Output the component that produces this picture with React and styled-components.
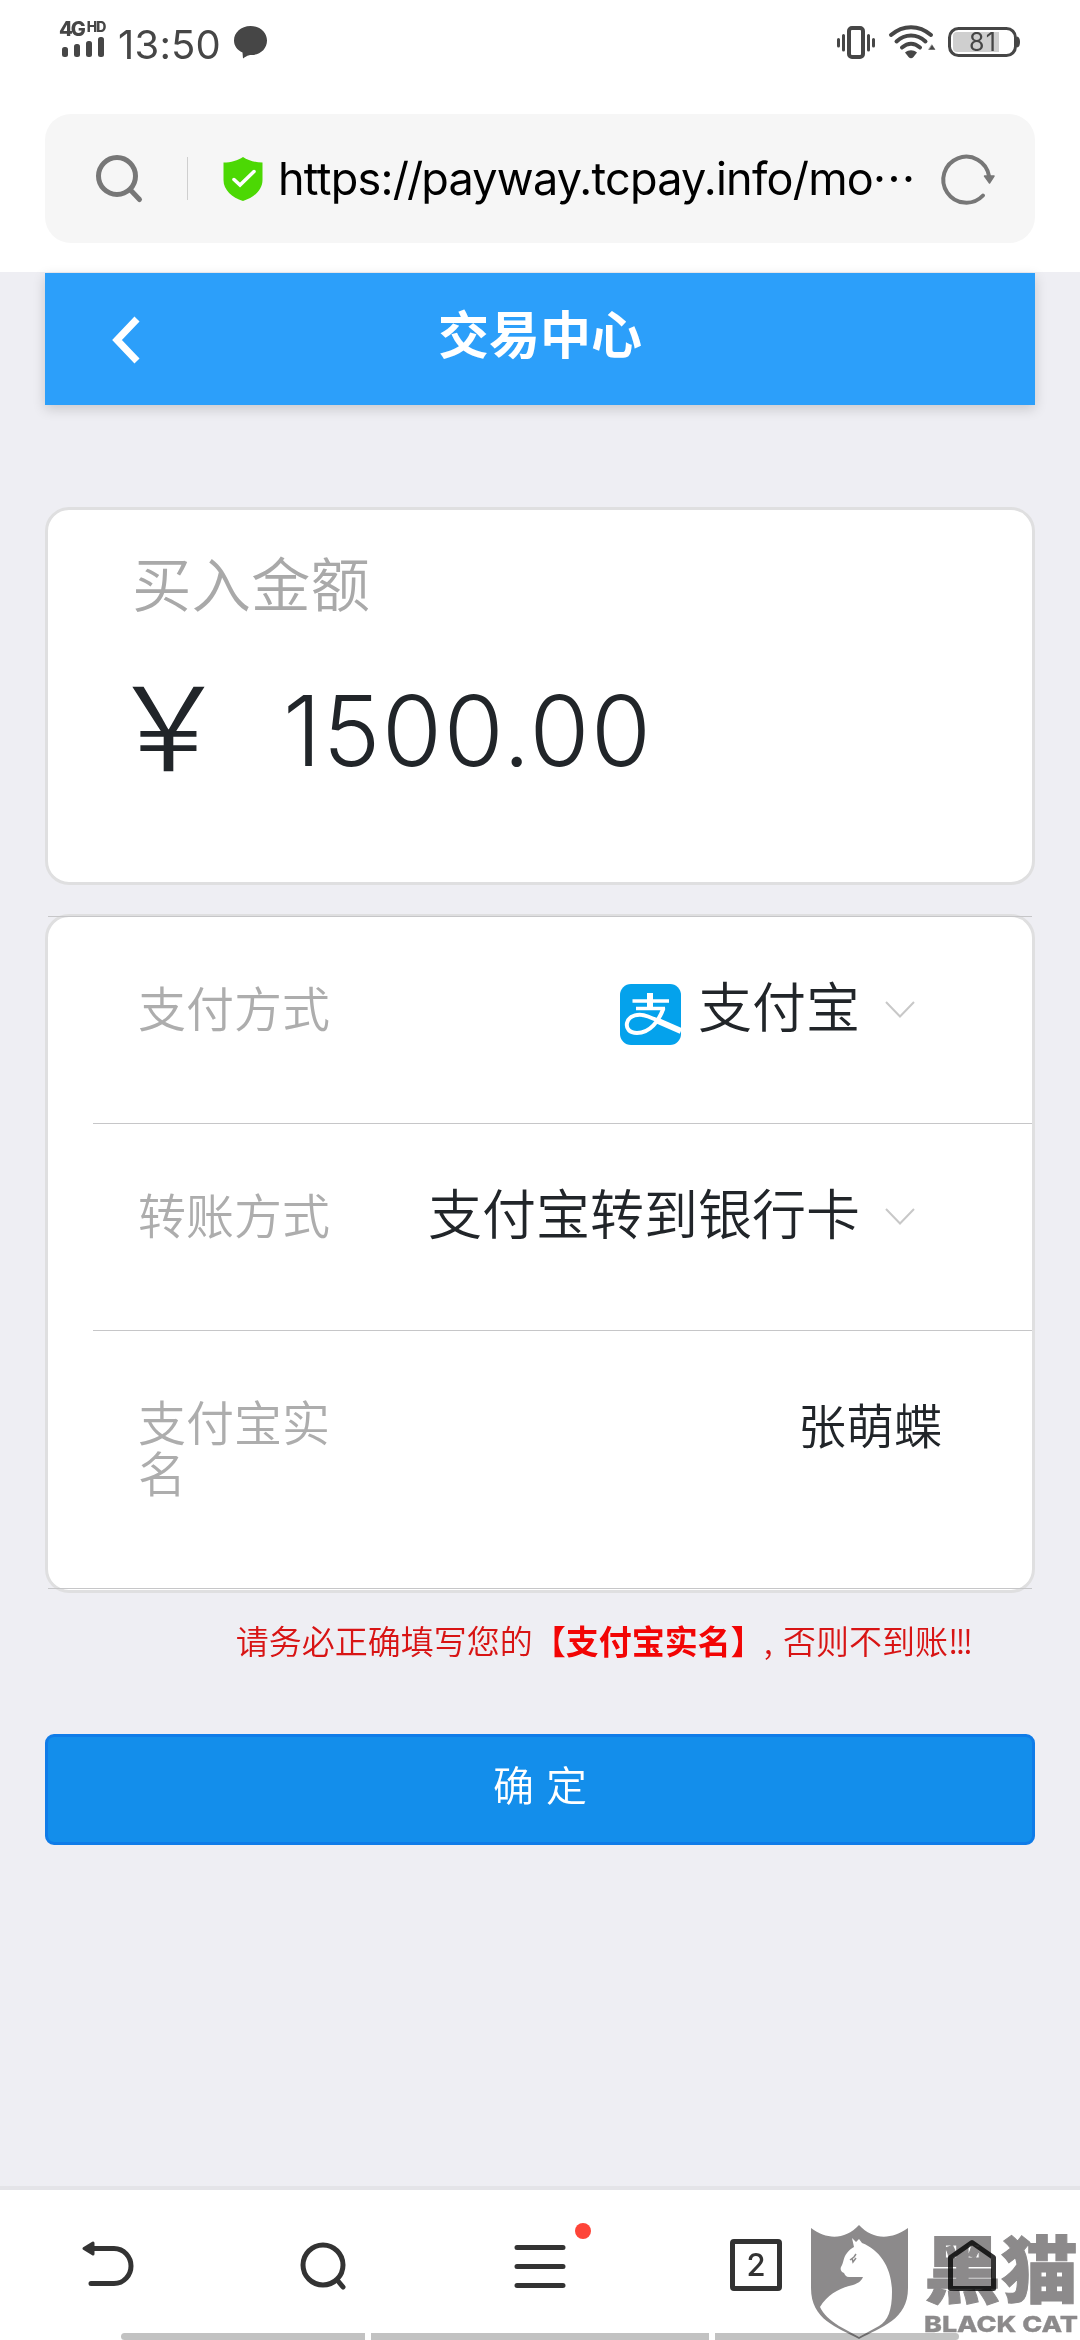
import React from 'react'
import styled, { createGlobalStyle } from 'styled-components'

const GlobalStyle = createGlobalStyle`
  body {
    margin: 0;
    background-color: #eeeef3;
    font-family: "Noto Sans CJK SC", "Noto Sans", sans-serif;
  }

  * {
    box-sizing: border-box;
  }

  svg {
    display: block;
    flex: none;
    overflow: visible;
  }
`;

const Phone = styled.div`
  position: relative;
  width: 1080px;
  height: 2340px;
  display: flex;
  flex-direction: column;
  overflow: hidden;
  background-color: #eeeef3;
`;

const Top = styled.div`
  height: 272px;
  flex: none;
  background-color: #fff;
  padding: 0 45px;
`;

const StatusBar = styled.div`
  height: 114px;
  display: flex;
  justify-content: space-between;
  padding: 20px 14px 0 14px;
`;

const StatusSide = styled.div`
  display: flex;
  align-items: flex-start;
`;

const Signal = styled.div`
  width: 50px;
  height: 40px;
  margin-right: 9px;
`;

const Network = styled.div`
  display: flex;
  gap: 3px;
  height: 17px;
  color: #464646;
  font-family: Inter, sans-serif;
  font-weight: 800;
  font-size: 20px;
  line-height: 19px;
  letter-spacing: -2px;

  small {
    font-size: 14px;
    line-height: 14px;
    letter-spacing: -1px;
  }
`;

const Clock = styled.div`
  width: 106px;
  margin-right: 9px;
  color: #464646;
  font-family: Inter, sans-serif;
  font-size: 40px;
  line-height: 49px;
  font-weight: 400;
  letter-spacing: 0.2px;
  white-space: nowrap;
`;

const StatusIcon = styled.div`
  margin-right: ${(props) => props.$gap || 0}px;
`;

const AddressBar = styled.div`
  height: 129px;
  border-radius: 26px;
  background-color: #f6f6f6;
  display: flex;
  align-items: center;
  padding: 0 40px 0 50px;
`;

const Divider = styled.div`
  width: 1px;
  height: 43px;
  margin: 0 35px 0 43px;
  background-color: #cfcfcf;
`;

const Url = styled.div`
  flex: 1;
  margin-left: 15px;
  color: #000;
  font-family: Inter, sans-serif;
  font-size: 45px;
  line-height: 60px;
  letter-spacing: -0.75px;
  white-space: nowrap;
`;

const Slashes = styled.span`
  letter-spacing: -2px;
`;

const Dots = styled.span`
  letter-spacing: 1.5px;
`;

const Page = styled.div`
  flex: 1;
  padding: 1px 45px 0 45px;
`;

const Header = styled.div`
  height: 132px;
  display: flex;
  align-items: center;
  background-color: #2c9ffa;
  box-shadow: 0 4px 12px rgba(0, 0, 0, 0.16);
`;

const Back = styled.div`
  width: 120px;
  padding-left: 65px;
`;

const Title = styled.h1`
  flex: 1;
  margin: 0 120px 0 0;
  padding-bottom: 14px;
  color: #fff;
  font-size: 51px;
  line-height: 60px;
  font-weight: 700;
  text-align: center;
`;

const AmountCard = styled.div`
  height: 378px;
  margin-top: 102px;
  padding: 36px 84px 0 84px;
  border: 3px solid #dfdfe0;
  border-radius: 24px;
  background-color: #fff;
`;

const AmountLabel = styled.div`
  color: #a9a9a9;
  font-size: 59.5px;
  line-height: 70px;
  font-weight: 350;
`;

const Amount = styled.div`
  margin-top: 60px;
  height: 110px;
  display: flex;
  color: #212529;
`;

const Yen = styled.div`
  width: 173px;
  margin-left: -22px;
  font-size: 117px;
  font-weight: 350;
  line-height: 88px;
`;

const Sum = styled.div`
  font-family: Inter, sans-serif;
  font-size: 97px;
  font-weight: 300;
  line-height: 110px;
  letter-spacing: 1.7px;
`;

const List = styled.div`
  height: 679px;
  margin-top: 29px;
  border: 3px solid #dfdfe0;
  border-radius: 24px;
  background-color: #fff;
`;

const Line = styled.div`
  height: 1px;
  margin-top: ${(props) => (props.$first ? -1 : 0)}px;
  margin-left: ${(props) => props.$inset || 0}px;
  background-color: #c6c6c8;
`;

const Row = styled.div`
  height: ${(props) => props.$height || 206}px;
  display: flex;
  justify-content: space-between;
  padding: 64px 90px 0 90px;
`;

const Label = styled.div`
  width: 200px;
  color: #adadad;
  font-size: 48px;
  line-height: 51px;
  font-weight: 350;
`;

const Value = styled.div`
  display: flex;
  margin: ${(props) => (props.$small ? '0' : '-6px 27px 0 0')};
  color: #212529;
  font-size: ${(props) => (props.$small ? 48 : 54)}px;
  line-height: ${(props) => (props.$small ? 56 : 60)}px;
  font-weight: 350;
  white-space: nowrap;
`;

const AlipayIcon = styled.div`
  margin: 9px 17px 0 0;
`;

const Arrow = styled.div`
  margin: 25px 0 0 25px;
`;

const Notice = styled.p`
  margin: 24px 65px 0 0;
  color: #d81414;
  font-size: 33px;
  line-height: 46px;
  font-weight: 350;
  text-align: right;
  white-space: nowrap;

  b {
    color: #f20505;
  }
`;

const Mark = styled.span`
  letter-spacing: ${(props) => props.$space}px;
`;

const Submit = styled.button`
  display: block;
  width: 100%;
  height: 111px;
  margin: 71px 0 0 0;
  padding: 0 0 14px 0;
  border: 3px solid #0f7ce8;
  border-radius: 9px;
  background-color: #138eeb;
  color: #fff;
  font-family: inherit;
  font-size: 41px;
  font-weight: 350;
  line-height: 50px;
  word-spacing: 3px;
`;

const Toolbar = styled.div`
  height: 154px;
  flex: none;
  display: flex;
  flex-direction: column;
  border-top: 4px solid #e4e4e8;
  background-color: #fff;
`;

const Tools = styled.div`
  height: 143px;
  display: flex;
  padding: 47px 0 0 0;
`;

const Tool = styled.div`
  position: relative;
  width: 216px;
  display: flex;
  justify-content: center;
`;

const Dot = styled.span`
  position: absolute;
  top: -14px;
  left: 143px;
  width: 16px;
  height: 16px;
  border-radius: 50%;
  background-color: #fe4438;
`;

const Tabs = styled.div`
  width: 52px;
  height: 52px;
  margin-top: 2px;
  border: 5px solid #333;
  border-radius: 4px;
  color: #333;
  font-family: Inter, sans-serif;
  font-size: 31px;
  font-weight: 500;
  line-height: 41px;
  text-align: center;
`;

const Gestures = styled.div`
  display: flex;
  gap: 6px;
  padding-left: 121px;
`;

const Gesture = styled.div`
  width: ${(props) => props.$width}px;
  height: 7px;
  border-radius: ${(props) => props.$radius};
  background-color: #c2c2c2;
`;

const Watermark = styled.div`
  position: absolute;
  right: 0;
  bottom: 0;
  opacity: 0.88;
  mix-blend-mode: multiply;
`;

const App = () => {
  return (
    <Phone>
      <GlobalStyle />

      <Top>
        <StatusBar>
          <StatusSide>
            <Signal>
              <Network>4G<small>HD</small></Network>
              <svg width="50" height="22" fill="#464646">
                <rect x="3" y="10" width="6" height="10" rx="2.5" />
                <rect x="15" y="7" width="6" height="13" rx="2.5" />
                <rect x="27" y="4" width="6" height="16" rx="2.5" />
                <rect x="39" y="0" width="6" height="20" rx="2.5" />
              </svg>
            </Signal>
            <Clock>13:50</Clock>
            <svg width="36" height="42" viewBox="0 0 36 42" fill="#464646">
              <path d="M17.500 6C27 6 34 12.500 34 20.500C34 29 27 35 18.500 35C16.500 35 15 35 10 38.500L9.500 32.500C4 30 1 25.500 1 20.500C1 12.500 8 6 17.500 6Z" />
            </svg>
          </StatusSide>

          <StatusSide>
            <StatusIcon $gap={12}>
              <svg width="40" height="42" viewBox="0 0 40 42" stroke="#464646" strokeLinecap="round">
                <rect x="13" y="8" width="14" height="29" rx="3" fill="none" stroke="#464646" strokeWidth="4" />
                <path d="M2.500 19.500V26M7.500 15.500V30M32.500 15.500V30M37.500 19.500V26" strokeWidth="3" />
              </svg>
            </StatusIcon>
            <StatusIcon $gap={12}>
              <svg width="48" height="42" viewBox="0 0 48 42" fill="none" stroke="#464646" strokeWidth="4" strokeLinecap="round">
                <path d="M3 15C15 4.500 31 4.500 43 15M8.500 21.500C17 13.500 29 13.500 37.500 21.500M14 27.500C20 22.500 26 22.500 32 27.500" />
                <path d="M17 32.500C21 29.500 25 29.500 29 32.500L25.500 37Q23 39.500 20.500 37Z" fill="#464646" stroke="none" />
                <path d="M44 25L47 29.500H41Z" fill="#464646" strokeWidth="0.500" />
              </svg>
            </StatusIcon>
            <svg width="73" height="42" viewBox="0 0 73 42">
              <rect x="1.500" y="8.500" width="66" height="27" rx="9" fill="none" stroke="#464646" strokeWidth="3" />
              <path d="M9 12H51V32H9Q5 32 5 28V16Q5 12 9 12Z" fill="#cfcfcf" />
              <path d="M69 16.500Q72 17 72 22Q72 27 69 27.500Z" fill="#464646" />
              <text x="21" y="31" fontFamily="Inter, sans-serif" fontSize="25" fill="#464646" textLength="27">81</text>
            </svg>
          </StatusSide>
        </StatusBar>

        <AddressBar>
          <svg width="49" height="49" viewBox="0 0 49 49" fill="none" stroke="#777" strokeWidth="5" strokeLinecap="round">
            <circle cx="22" cy="22" r="18.500" />
            <path d="M35.500 36L44.500 45.500" />
          </svg>
          <Divider />
          <svg width="40" height="46" viewBox="0 0 40 46">
            <path d="M20 1C25 4.500 32 6.500 39.500 6.500V24C39.500 34 31 41.500 20 45C9 41.500 0.500 34 0.500 24V6.500C8 6.500 15 4.500 20 1Z" fill="#4cd804" />
            <path d="M11 23.500L17 29L31 15.500" fill="none" stroke="#fff" strokeWidth="3.500" strokeLinecap="round" />
          </svg>
          <Url>https:<Slashes>//</Slashes>payway.tcpay.info/mo<Dots>···</Dots></Url>
          <svg width="54" height="52" viewBox="0 0 54 52" fill="none" stroke="#777" strokeWidth="4" strokeLinecap="round">
            <path d="M42 42.500A23 23 0 1 1 48 23" />
            <path d="M43.500 23H53L48.500 30Z" fill="#777" strokeWidth="1.500" strokeLinejoin="round" />
          </svg>
        </AddressBar>
      </Top>

      <Page>
        <Header>
          <Back>
            <svg width="32" height="48" viewBox="0 0 32 48" fill="none" stroke="#fff" strokeWidth="7">
              <path d="M27 4L7 25L27 46" />
            </svg>
          </Back>
          <Title>交易中心</Title>
        </Header>

        <AmountCard>
          <AmountLabel>买入金额</AmountLabel>
          <Amount>
            <Yen>￥</Yen>
            <Sum>1500.00</Sum>
          </Amount>
        </AmountCard>

        <List>
          <Line $first />
          <Row>
            <Label>支付方式</Label>
            <Value>
              <AlipayIcon>
                <svg width="61" height="61" viewBox="0 0 61 61">
                  <rect width="61" height="61" rx="11" fill="#04a2ec" />
                  <g fill="none" stroke="#fff" strokeWidth="3.500">
                    <path d="M30 9V24" strokeWidth="6" />
                    <path d="M12.500 17H49M16 24.500H45" />
                    <path d="M43.500 24C39 37 30 49 17 49C9 49 6 44 7 39C9 31 19 29 28 32.500C36 35.500 44 39 52 43" strokeWidth="4" />
                    <path d="M37 36.500L61 47" strokeWidth="6" />
                  </g>
                </svg>
              </AlipayIcon>
              支付宝
              <Arrow>
                <svg width="30" height="20" viewBox="0 0 30 20" fill="none" stroke="#c8c8c8" strokeWidth="2">
                  <path d="M1 2L15 16.500L29 2" />
                </svg>
              </Arrow>
            </Value>
          </Row>
          <Line $inset={45} />
          <Row>
            <Label>转账方式</Label>
            <Value>
              支付宝转到银行卡
              <Arrow>
                <svg width="30" height="20" viewBox="0 0 30 20" fill="none" stroke="#c8c8c8" strokeWidth="2">
                  <path d="M1 2L15 16.500L29 2" />
                </svg>
              </Arrow>
            </Value>
          </Row>
          <Line $inset={45} />
          <Row $height={257}>
            <Label>支付宝实名</Label>
            <Value $small>张萌蝶</Value>
          </Row>
          <Line />
        </List>

        <Notice>
          请务必正确填写您的<b>【支付宝实名】</b><Mark $space={1.5}>, </Mark>否则不到账<Mark $space={-3}>!!!</Mark>
        </Notice>
        <Submit>确 定</Submit>
      </Page>

      <Toolbar>
        <Tools>
          <Tool>
            <svg width="54" height="56" viewBox="0 0 54 56" fill="none" stroke="#333" strokeWidth="5" strokeLinecap="round">
              <path d="M11 11.500H33C43 11.500 50 20 50 29C50 38 43 46.500 33 46.500H10" />
              <path d="M3 11.500L12 6V17Z" fill="#333" strokeWidth="3" strokeLinejoin="round" />
            </svg>
          </Tool>
          <Tool>
            <svg width="48" height="56" viewBox="0 0 48 56" fill="none" stroke="#333" strokeWidth="5" strokeLinecap="round">
              <circle cx="23" cy="28" r="20" />
              <path d="M38 44L43 50" />
            </svg>
          </Tool>
          <Tool>
            <svg width="52" height="56" viewBox="0 0 52 56" stroke="#333" strokeWidth="5" strokeLinecap="round">
              <path d="M3 10.500H49M3 29.500H49M3 48.500H49" />
            </svg>
            <Dot />
          </Tool>
          <Tool>
            <Tabs>2</Tabs>
          </Tool>
          <Tool>
            <svg width="50" height="56" viewBox="0 0 50 56" fill="none" stroke="#333" strokeWidth="5" strokeLinejoin="round">
              <path d="M3.500 20.500L25 5.500L46.500 20.500V51.500H3.500Z" />
            </svg>
          </Tool>
        </Tools>
        <Gestures>
          <Gesture $width={244} $radius="4px 0 0 4px" />
          <Gesture $width={338} $radius="0" />
          <Gesture $width={244} $radius="0 4px 4px 0" />
        </Gestures>
      </Toolbar>

      <Watermark>
        <svg width="272" height="118" viewBox="0 0 272 118">
          <path d="M3 6C19 18 37 18 51 3C65 18 83 18 100 6V66C100 98 73 105 51 117C29 105 3 98 3 66Z" fill="#7c7a7b" />
          <path d="M44 16L48 20L51 17L54 21C72 28 84 46 84 70C84 88 80 99 71 104L51 115L31 104C22 98 15 92 12 85C20 72 32 66 45 63C51 61 54 58 55 55H41C38 55 37 53 36 51C33 50 32 47 33 45C36 40 35 36 39 31C41 28 44 26 46 25Z" fill="#fff" />
          <path d="M42 38L46 35L48 32M44 36L45 40L48 36" fill="none" stroke="#7c7a7b" strokeWidth="1.500" />
          <g fill="#7c7a7b" stroke="#7c7a7b">
            <text x="116" y="75" fontFamily="'Noto Sans CJK SC', sans-serif" fontSize="73" fontWeight="900" strokeWidth="1" textLength="154" lengthAdjust="spacingAndGlyphs">黑猫</text>
            <text x="116" y="110" fontFamily="Inter, sans-serif" fontSize="22" fontWeight="800" strokeWidth="0.300" textLength="154" lengthAdjust="spacingAndGlyphs">BLACK CAT</text>
          </g>
        </svg>
      </Watermark>
    </Phone>
  )
}

export default App
